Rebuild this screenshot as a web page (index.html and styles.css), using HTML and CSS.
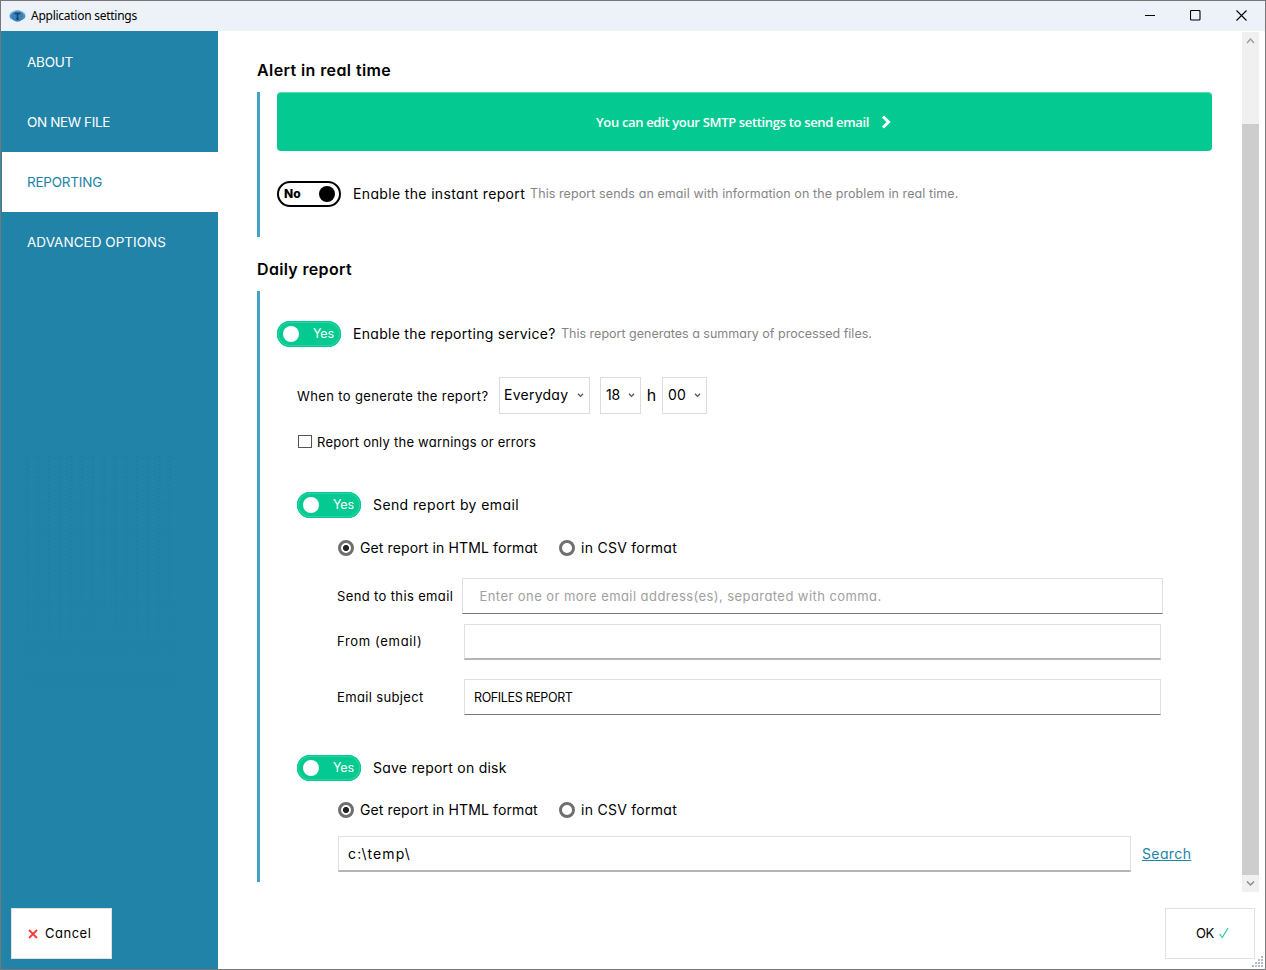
FILE: index.html
```html
<!DOCTYPE html>
<html lang="en">
<head>
<meta charset="utf-8">
<title>Application settings</title>
<link rel="stylesheet" href="styles.css">
</head>
<body>
<div class="window">
  <header class="titlebar">
    <svg class="app-icon" width="17" height="14" viewBox="0 0 17 14"><ellipse cx="8.5" cy="7" rx="8" ry="5" fill="#4a93c8"/><circle cx="8.5" cy="7" r="5.8" fill="#3b80b8"/><path d="M1 5.5Q3 2 8.500 1.500Q14 2 16 5.500" fill="none" stroke="#8fc3e4" stroke-width="1.200"/><path d="M5.500 4.500h6M8.500 4.500v5.500M7 10h3" stroke="#16466f" stroke-width="1.600"/></svg>
    <span class="title">Application settings</span>
    <div class="controls">
      <svg width="11" height="11" viewBox="0 0 11 11"><path d="M0 5.500h10" stroke="#000"/></svg>
      <svg width="11" height="11" viewBox="0 0 11 11"><rect x=".5" y=".5" width="9.500" height="9.500" rx="1" fill="none" stroke="#000" stroke-width="1.100"/></svg>
      <svg width="11" height="11" viewBox="0 0 11 11"><path d="M.5.5l10 10M10.500.5l-10 10" stroke="#000" stroke-width="1.100"/></svg>
    </div>
  </header>
  <div class="body">
    <aside class="sidebar">
      <nav class="nav">
        <a class="nav-item nav-about">ABOUT</a>
        <a class="nav-item nav-file">ON NEW FILE</a>
        <a class="nav-item nav-report active">REPORTING</a>
        <a class="nav-item nav-advanced">ADVANCED OPTIONS</a>
      </nav>
      <div class="texture"></div>
      <button class="btn cancel"><svg width="10" height="10" viewBox="0 0 10 10"><path d="M1 1l8 8M9 1L1 9" stroke="#fa3c3c" stroke-width="1.900"/></svg><span>Cancel</span></button>
    </aside>
    <main class="main">
      <div class="scroll">
        <div class="content">
          <h2 class="heading">Alert in real time</h2>
          <section class="section alert">
            <a class="banner"><span>You can edit your SMTP settings to send email</span><svg width="10" height="14" viewBox="0 0 10 14"><path d="M2 1.500L7.500 7L2 12.500" fill="none" stroke="#fff" stroke-width="3"/></svg></a>
            <div class="row instant">
              <div class="toggle off"><span>No</span><i class="knob"></i></div>
              <span class="label lb-instant">Enable the instant report</span>
              <span class="hint hint-instant">This report sends an email with information on the problem in real time.</span>
            </div>
          </section>
          <h2 class="heading daily-heading">Daily report</h2>
          <section class="section daily">
            <div class="row">
              <div class="toggle on"><i class="knob"></i><span>Yes</span></div>
              <span class="label lb-service">Enable the reporting service?</span>
              <span class="hint hint-service">This report generates a summary of processed files.</span>
            </div>
            <div class="schedule">
              <span class="when">When to generate the report?</span>
              <div class="select day"><span>Everyday</span><svg width="7" height="5" viewBox="0 0 7 5"><path d="M1 .7l2.500 2.700L6 .7" fill="none" stroke="#555" stroke-width="1.300"/></svg></div>
              <div class="select hour"><span>18</span><svg width="7" height="5" viewBox="0 0 7 5"><path d="M1 .7l2.500 2.700L6 .7" fill="none" stroke="#555" stroke-width="1.300"/></svg></div>
              <span class="h">h</span>
              <div class="select minute"><span>00</span><svg width="7" height="5" viewBox="0 0 7 5"><path d="M1 .7l2.500 2.700L6 .7" fill="none" stroke="#555" stroke-width="1.300"/></svg></div>
            </div>
            <label class="check"><i class="box"></i><span>Report only the warnings or errors</span></label>
            <div class="row nested email-row">
              <div class="toggle on"><i class="knob"></i><span>Yes</span></div>
              <span class="label lb-send">Send report by email</span>
            </div>
            <div class="radios email-radios">
              <i class="radio checked"></i><span class="html">Get report in HTML format</span>
              <i class="radio"></i><span class="csv">in CSV format</span>
            </div>
            <div class="field to"><span class="field-label">Send to this email</span><div class="input"><span>Enter one or more email address(es), separated with comma.</span></div></div>
            <div class="field from"><span class="field-label">From (email)</span><div class="input thick"></div></div>
            <div class="field subject"><span class="field-label">Email subject</span><div class="input"><span>ROFILES REPORT</span></div></div>
            <div class="row nested disk-row">
              <div class="toggle on"><i class="knob"></i><span>Yes</span></div>
              <span class="label lb-save">Save report on disk</span>
            </div>
            <div class="radios disk-radios">
              <i class="radio checked"></i><span class="html">Get report in HTML format</span>
              <i class="radio"></i><span class="csv">in CSV format</span>
            </div>
            <div class="path"><div class="input thick"><span>c:\temp\</span></div><a class="search">Search</a></div>
          </section>
        </div>
        <div class="scrollbar">
          <svg class="arrow" width="17" height="17" viewBox="0 0 17 17"><path d="M5 11l3.500-4L12 11" fill="none" stroke="#9a9a9a" stroke-width="1.400"/></svg>
          <div class="thumb"></div>
          <svg class="arrow" width="17" height="17" viewBox="0 0 17 17"><path d="M5 6.500l3.500 3.500L12 6.500" fill="none" stroke="#8c8c8c" stroke-width="1.500"/></svg>
        </div>
      </div>
      <footer class="footer">
        <button class="btn ok"><span>OK</span><svg width="10" height="12" viewBox="0 0 10 12"><path d="M.7 7.200L3.300 10.500L9 1" fill="none" stroke="#2fc995" stroke-width="1.200"/></svg></button>
      </footer>
      <svg class="grip" width="11" height="11" viewBox="0 0 11 11" fill="#b4bccc"><path d="M9 0h2v2H9zM6 3h2v2H6zM9 3h2v2H9zM3 6h2v2H3zM6 6h2v2H6zM9 6h2v2H9zM0 9h2v2H0zM3 9h2v2H3zM6 9h2v2H6zM9 9h2v2H9z"/></svg>
    </main>
  </div>
</div>
</body>
</html>
```
FILE: styles.css
```css
* { box-sizing: border-box; }
body {
  margin: 0;
  font-family: Inter, sans-serif;
  font-feature-settings: "cv11";
  font-size: 14px;
  color: #000;
  background: #fff;
}
span, a { white-space: nowrap; }
svg, i { flex: none; display: block; }

.window {
  width: 1266px;
  height: 970px;
  border: 1px solid #777;
  display: flex;
  flex-direction: column;
}
.titlebar {
  height: 30px;
  flex: none;
  background: #edf2f9;
  display: flex;
  align-items: center;
  padding: 0 18px 1px 8px;
}
.title {
  font: 12px "Noto Sans", "Open Sans", sans-serif;
  letter-spacing: -0.26px;
  margin-left: 5px;
}
.controls { display: flex; gap: 34px; margin-left: auto; }
.controls svg:last-child { margin-left: 1px; }

.body { flex: 1; display: flex; min-height: 0; }
.sidebar {
  width: 217px;
  flex: none;
  background: #2183a7;
  display: flex;
  flex-direction: column;
}
.nav { padding: 1px 0 0 1px; }
.nav-item {
  display: flex;
  align-items: center;
  height: 60px;
  padding-left: 25px;
  font-size: 13.5px;
  color: #fff;
}
.nav-item.active { background: #fff; color: #2183a7; }
.nav-about { letter-spacing: -0.246px; }
.nav-file { letter-spacing: -0.365px; }
.nav-report { letter-spacing: -0.224px; }
.nav-advanced { letter-spacing: 0.035px; }
.texture {
  width: 150px;
  height: 250px;
  margin: 184px 0 0 25px;
  opacity: 0.6;
  background:
    repeating-linear-gradient(180deg, transparent 0 2px, #2183a7 2px 4px),
    repeating-linear-gradient(90deg, #1d7ba8 0 2px, #2183a7 2px 5px, #258ba6 5px 6px, #2183a7 6px 11px);
  -webkit-mask-image: linear-gradient(#000, transparent);
  mask-image: linear-gradient(#000, transparent);
}

.btn {
  height: 51px;
  padding: 0 0 1px;
  border: 1px solid #e0e0e0;
  background: #fff;
  color: #000;
  font: 13px Inter, sans-serif;
  font-feature-settings: "cv11";
  display: flex;
  align-items: center;
  justify-content: center;
}
.cancel { width: 101px; margin: auto 0 10px 10px; gap: 7px; justify-content: flex-start; padding-left: 16px; }
.cancel span { letter-spacing: 0.5px; }
.cancel svg { margin-top: 2px; }
.ok { width: 90px; gap: 5px; padding-left: 5px; }
.ok span { letter-spacing: -0.337px; }

.main { flex: 1; display: flex; flex-direction: column; position: relative; min-width: 0; }
.scroll { height: 861px; flex: none; display: flex; padding-right: 6px; }
.content { flex: 1; padding: 27px 30px 0 39px; }
.heading {
  margin: 0;
  font-size: 16px;
  font-weight: 600;
  line-height: 24px;
  letter-spacing: 0.4px;
}
.daily-heading { margin-top: 20px; letter-spacing: 0.33px; }
.section { border-left: 3px solid #42a3c4; padding-left: 17px; }
.alert { margin-top: 10px; height: 145px; }
.daily { margin-top: 10px; height: 591px; padding-top: 30px; }

.banner {
  height: 59px;
  border-top: 1px solid #5cdcb4;
  border-radius: 4px;
  background: #04ca91;
  color: #fff;
  font: 600 13px "Open Sans", sans-serif;
  letter-spacing: -0.337px;
  display: flex;
  align-items: center;
  justify-content: center;
  gap: 12px;
  padding-right: 2px;
}

.row { display: flex; align-items: center; height: 26px; }
.instant { margin-top: 30px; }
.nested { margin-left: 20px; }
.toggle {
  width: 64px;
  height: 26px;
  flex: none;
  border-radius: 13px;
  display: flex;
  align-items: center;
  justify-content: space-between;
}
.knob { width: 16px; height: 16px; border-radius: 50%; }
.off { border: 2px solid #000; padding: 0 4px 0 5px; font-size: 12px; font-weight: 800; }
.off span { margin-bottom: 1px; }
.off .knob { background: #000; }
.on { background: #04ca91; color: #fff; padding: 0 7px 0 6px; font-size: 12.5px; box-shadow: inset 0 0 0 1px #04ca91, inset 0 0 0 2px #2bd3a2; }
.on .knob { background: #fff; }
.on span { letter-spacing: -0.137px; margin-bottom: 1px; }
.label { margin-left: 12px; padding-bottom: 2px; }
.lb-instant { width: 172px; letter-spacing: 0.35px; }
.lb-service { width: 203px; letter-spacing: 0.29px; }
.lb-send { letter-spacing: 0.4px; }
.lb-save { letter-spacing: 0.24px; }
.hint { margin-left: 5px; padding-bottom: 1px; font-size: 12.5px; color: #858585; }
.hint-instant { letter-spacing: 0.087px; }
.hint-service { letter-spacing: 0; }

.schedule { display: flex; align-items: center; height: 37px; margin: 30px 0 0 20px; }
.when { width: 202px; font-size: 13px; letter-spacing: 0.375px; padding-top: 1px; }
.select {
  height: 37px;
  border: 1px solid #dcdcdc;
  display: flex;
  align-items: center;
  justify-content: space-between;
  padding: 0 5px 1px;
}
.select span { padding-bottom: 1px; }
.day { width: 91px; margin-right: 10px; padding-left: 4px; letter-spacing: 0.25px; }
.hour { width: 41px; letter-spacing: -0.178px; }
.minute { width: 45px; letter-spacing: 0.168px; }
.h { width: 21px; text-align: center; font-size: 16px; padding-bottom: 1px; }

.check { display: flex; align-items: center; height: 20px; margin: 18px 0 0 21px; font-size: 13px; letter-spacing: 0.235px; }
.box { width: 14px; height: 13px; border: 1px solid #555; margin: 0 5px 1px 0; }

.email-row { margin-top: 40px; }
.disk-row { margin-top: 40px; }
.radios { display: flex; align-items: center; height: 20px; padding-left: 61px; }
.radios span { padding-bottom: 2px; }
.email-radios { margin-top: 20px; }
.disk-radios { margin-top: 19px; }
.radio { width: 16px; height: 16px; border: 3px solid #6f6f6f; border-radius: 50%; margin-right: 6px; }
.checked { background: radial-gradient(circle, #222 2.7px, transparent 3.4px); }
.html { width: 199px; letter-spacing: 0.115px; }
.csv { letter-spacing: 0.27px; }

.field { display: flex; align-items: center; height: 36px; padding-left: 60px; }
.to { margin-top: 20px; }
.from { margin-top: 10px; }
.subject { margin-top: 19px; }
.field-label { width: 127px; font-size: 13px; letter-spacing: 0.365px; }
.to .field-label { width: 125px; }
.from .field-label { letter-spacing: 0.66px; padding-bottom: 2px; }
.subject .field-label { letter-spacing: 0.36px; }
.input {
  width: 697px;
  height: 36px;
  border: 1px solid #e0e0e0;
  border-bottom-color: #777;
  display: flex;
  align-items: center;
  padding-left: 9px;
}
.thick { border-bottom: 2px solid #b5b5b5; }
.to .input { width: 701px; padding-left: 16.5px; font-size: 13px; letter-spacing: 0.43px; color: #a0a0a0; }
.subject .input { font-size: 12.5px; letter-spacing: -0.369px; }

.path { display: flex; align-items: center; margin-top: 16px; padding-left: 61px; }
.path .input { width: 793px; letter-spacing: 1.162px; }
.path .input span { padding-bottom: 1px; }
.search { margin-left: 11px; padding-bottom: 2px; color: #2183a7; text-decoration: underline; letter-spacing: 0.38px; }

.scrollbar { width: 17px; flex: none; margin-top: 1px; background: #f0f0f0; display: flex; flex-direction: column; }
.thumb { height: 751px; margin-top: 75px; background: #cdcdcd; }

.footer { display: flex; justify-content: flex-end; padding: 16px 10px 0 0; }
.grip { position: absolute; right: 2px; bottom: 2px; }
```
